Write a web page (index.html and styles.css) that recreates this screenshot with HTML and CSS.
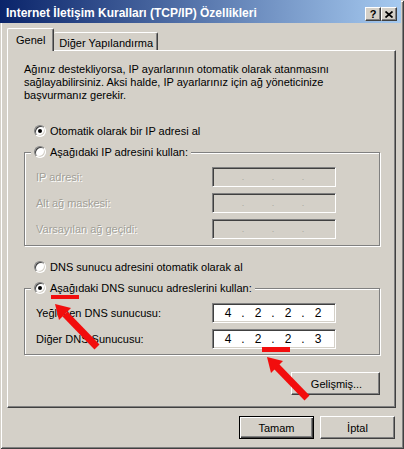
FILE: index.html
```html
<!DOCTYPE html>
<html lang="tr">
<head>
  <meta charset="UTF-8">
  <title>Internet İletişim Kuralları (TCP/IP) Özellikleri</title>
  <link rel="stylesheet" href="styles.css">
</head>
<body>

  <div class="window">
    <!-- Başlık çubuğu -->
    <div class="titlebar">
      <span class="title">Internet İletişim Kuralları (TCP/IP) Özellikleri</span>
      <div class="caption-buttons">
        <span class="cap-btn">?</span>
        <span class="cap-btn">
          <svg width="8" height="7" viewBox="0 0 8 7"><path d="M0.5 0.5 L7.5 6.5 M7.5 0.5 L0.5 6.5" stroke="#000" stroke-width="1.7"/></svg>
        </span>
      </div>
    </div>

    <!-- Sekmeler -->
    <div class="tabs">
      <div class="tab active">Genel</div>
      <div class="tab">Diğer Yapılandırma</div>
    </div>

    <div class="panel">
      <p class="intro">Ağınız destekliyorsa, IP ayarlarının otomatik olarak atanmasını<br>sağlayabilirsiniz. Aksi halde, IP ayarlarınız için ağ yöneticinize<br>başvurmanız gerekir.</p>

      <div class="radio-row">
        <span class="radio checked"></span>Otomatik olarak bir IP adresi al
      </div>

      <fieldset class="group">
        <legend><span class="radio"></span>Aşağıdaki IP adresini kullan:</legend>
        <div class="field-row disabled">
          <span>IP adresi:</span>
          <div class="ipbox off"><span class="octet"></span><span class="dot">.</span><span class="octet"></span><span class="dot">.</span><span class="octet"></span><span class="dot">.</span><span class="octet"></span></div>
        </div>
        <div class="field-row disabled">
          <span>Alt ağ maskesi:</span>
          <div class="ipbox off"><span class="octet"></span><span class="dot">.</span><span class="octet"></span><span class="dot">.</span><span class="octet"></span><span class="dot">.</span><span class="octet"></span></div>
        </div>
        <div class="field-row disabled">
          <span>Varsayılan ağ geçidi:</span>
          <div class="ipbox off"><span class="octet"></span><span class="dot">.</span><span class="octet"></span><span class="dot">.</span><span class="octet"></span><span class="dot">.</span><span class="octet"></span></div>
        </div>
      </fieldset>

      <div class="radio-row dns-auto">
        <span class="radio"></span>DNS sunucu adresini otomatik olarak al
      </div>

      <fieldset class="group dns">
        <legend><span class="radio checked"></span>Aşağıdaki DNS sunucu adreslerini kullan:</legend>
        <div class="field-row">
          <span>Yeğlenen DNS sunucusu:</span>
          <div class="ipbox"><span class="octet">4</span><span class="dot">.</span><span class="octet">2</span><span class="dot">.</span><span class="octet">2</span><span class="dot">.</span><span class="octet">2</span></div>
        </div>
        <div class="field-row">
          <span>Diğer DNS Sunucusu:</span>
          <div class="ipbox"><span class="octet">4</span><span class="dot">.</span><span class="octet">2</span><span class="dot">.</span><span class="octet">2</span><span class="dot">.</span><span class="octet">3</span></div>
        </div>
      </fieldset>

      <div class="advanced-row">
        <button class="btn wide">Gelişmiş...</button>
      </div>
    </div>

    <div class="footer">
      <button class="btn default">Tamam</button>
      <button class="btn">İptal</button>
    </div>

    <!-- Kırmızı işaretler -->
    <svg class="marks" width="404" height="449" viewBox="0 0 404 449">
      <rect x="51" y="295" width="28" height="4" fill="#f20d0d"/>
      <line x1="97" y1="347" x2="65" y2="314" stroke="#f20d0d" stroke-width="7"/>
      <polygon points="55,304 71,308 59,320" fill="#f20d0d"/>

      <rect x="262" y="347" width="28" height="5" fill="#f20d0d"/>
      <line x1="307" y1="398" x2="276" y2="366" stroke="#f20d0d" stroke-width="7"/>
      <polygon points="267,357 283,361 271,373" fill="#f20d0d"/>
    </svg>
  </div>

</body>
</html>
```

FILE: styles.css
```css
body {
  margin: 0;
  font-family: 'Liberation Sans', Arial, sans-serif;
  font-size: 11px;
  color: #000;
}

.window {
  position: relative;
  width: 404px;
  height: 449px;
  box-sizing: border-box;
  padding: 0 3px 3px 3px;
  background: #d4d0c8;
  box-shadow: inset 1px 1px #d4d0c8, inset -1px -1px #404040, inset 2px 2px #fff, inset -2px -2px #808080;
}

.titlebar {
  display: flex;
  justify-content: space-between;
  height: 23px;
  margin-left: -3px;
  padding-left: 6px;
  background: linear-gradient(to right, #0a246a, #a6caf0);
  color: #fff;
}

.title {
  font-weight: bold;
  font-size: 12px;
  line-height: 14px;
  margin-top: 6px;
}

.caption-buttons {
  display: flex;
  margin-top: 7px;
  margin-right: 4px;
}

.cap-btn {
  display: flex;
  align-items: center;
  justify-content: center;
  width: 16px;
  height: 14px;
  box-sizing: border-box;
  background: #d4d0c8;
  border: 1px solid;
  border-color: #fff #404040 #404040 #fff;
  box-shadow: inset -1px -1px #808080;
  color: #000;
  font-weight: bold;
  font-size: 11px;
  line-height: 11px;
}

/* sekmeler */
.tabs {
  display: flex;
  align-items: flex-end;
  height: 22px;
  margin-top: 5px;
  padding-left: 4px;
}

.tab {
  height: 18px;
  box-sizing: border-box;
  padding: 4px 4px 0 5px;
  border: 1px solid;
  border-bottom: none;
  border-color: #fff #404040 #fff #fff;
  border-radius: 2px 2px 0 0;
  box-shadow: inset -1px 0 #808080;
  line-height: 13px;
  white-space: nowrap;
}

.tab.active {
  position: relative;
  z-index: 1;
  height: 23px;
  margin-bottom: -1px;
  padding: 5px 8px 0 8px;
  background: #d4d0c8;
}

.tab.active + .tab {
  border-left: none;
}

.panel {
  height: 358px;
  box-sizing: border-box;
  margin: 0 5px 0 4px;
  padding: 12px 15px 0 16px;
  border: 1px solid;
  border-color: #fff #404040 #404040 #fff;
  box-shadow: inset -1px -1px #808080;
}

.intro {
  margin: 0 0 21px;
  line-height: 13px;
}

.radio-row {
  display: flex;
  align-items: center;
  height: 16px;
  padding-left: 10px;
}

.radio {
  position: relative;
  flex: none;
  width: 12px;
  height: 12px;
  box-sizing: border-box;
  margin-right: 4px;
  border-radius: 50%;
  background: #fff;
  border: 1px solid;
  border-color: #808080 #fff #fff #808080;
  box-shadow: inset 1px 1px #404040, inset -1px -1px #d4d0c8;
}

.radio.checked::after {
  content: "";
  position: absolute;
  left: 3px;
  top: 3px;
  width: 4px;
  height: 4px;
  border-radius: 50%;
  background: #000;
}

.group {
  min-width: 0;
  margin: 5px 0 0;
  padding: 7px 0 6px 11px;
  border: 1px solid #808080;
  box-shadow: inset 1px 1px #fff, 1px 1px #fff;
}

.group legend {
  display: flex;
  align-items: center;
  height: 16px;
  margin-left: -5px;
  padding: 0 3px 0 3px;
  background: #d4d0c8;
}

.dns-auto {
  margin-top: 13px;
}

.group.dns {
  margin-top: 5px;
  padding-bottom: 5px;
}

.field-row {
  display: grid;
  grid-template-columns: 176px 124px;
  align-items: center;
  height: 20px;
}

.field-row + .field-row {
  margin-top: 6px;
}

.field-row.disabled span {
  color: #a19f97;
  text-shadow: 1px 1px 0 #fff;
}

.ipbox {
  display: flex;
  align-items: center;
  height: 20px;
  box-sizing: border-box;
  padding-left: 4px;
  border: 1px solid;
  border-color: #808080 #fff #fff #808080;
  box-shadow: inset 1px 1px #404040, inset -1px -1px #d4d0c8;
  background: #fff;
  font-size: 12px;
}

.ipbox.off {
  background: #d4d0c8;
}

.field-row.disabled .ipbox span {
  color: #a8a69f;
  text-shadow: none;
  font-size: 9px;
}

.octet {
  width: 22px;
  text-align: center;
}

.dot {
  width: 8px;
  text-align: center;
}

.advanced-row {
  display: flex;
  justify-content: flex-end;
  margin-top: 17px;
}

.btn {
  width: 75px;
  height: 23px;
  box-sizing: border-box;
  padding: 0;
  background: #d4d0c8;
  border: 1px solid;
  border-color: #fff #404040 #404040 #fff;
  box-shadow: inset -1px -1px #808080;
  font-family: inherit;
  font-size: 11px;
  font-weight: normal;
  color: #000;
}

.btn.wide {
  width: 89px;
  padding-left: 2px;
}

.btn.default {
  border-color: #000;
  box-shadow: inset 1px 1px #fff, inset -1px -1px #404040, inset -2px -2px #808080;
}

.footer {
  display: flex;
  justify-content: flex-end;
  gap: 6px;
  margin: 8px 6px 0 0;
}

.marks {
  position: absolute;
  left: 0;
  top: 0;
  pointer-events: none;
}
```
